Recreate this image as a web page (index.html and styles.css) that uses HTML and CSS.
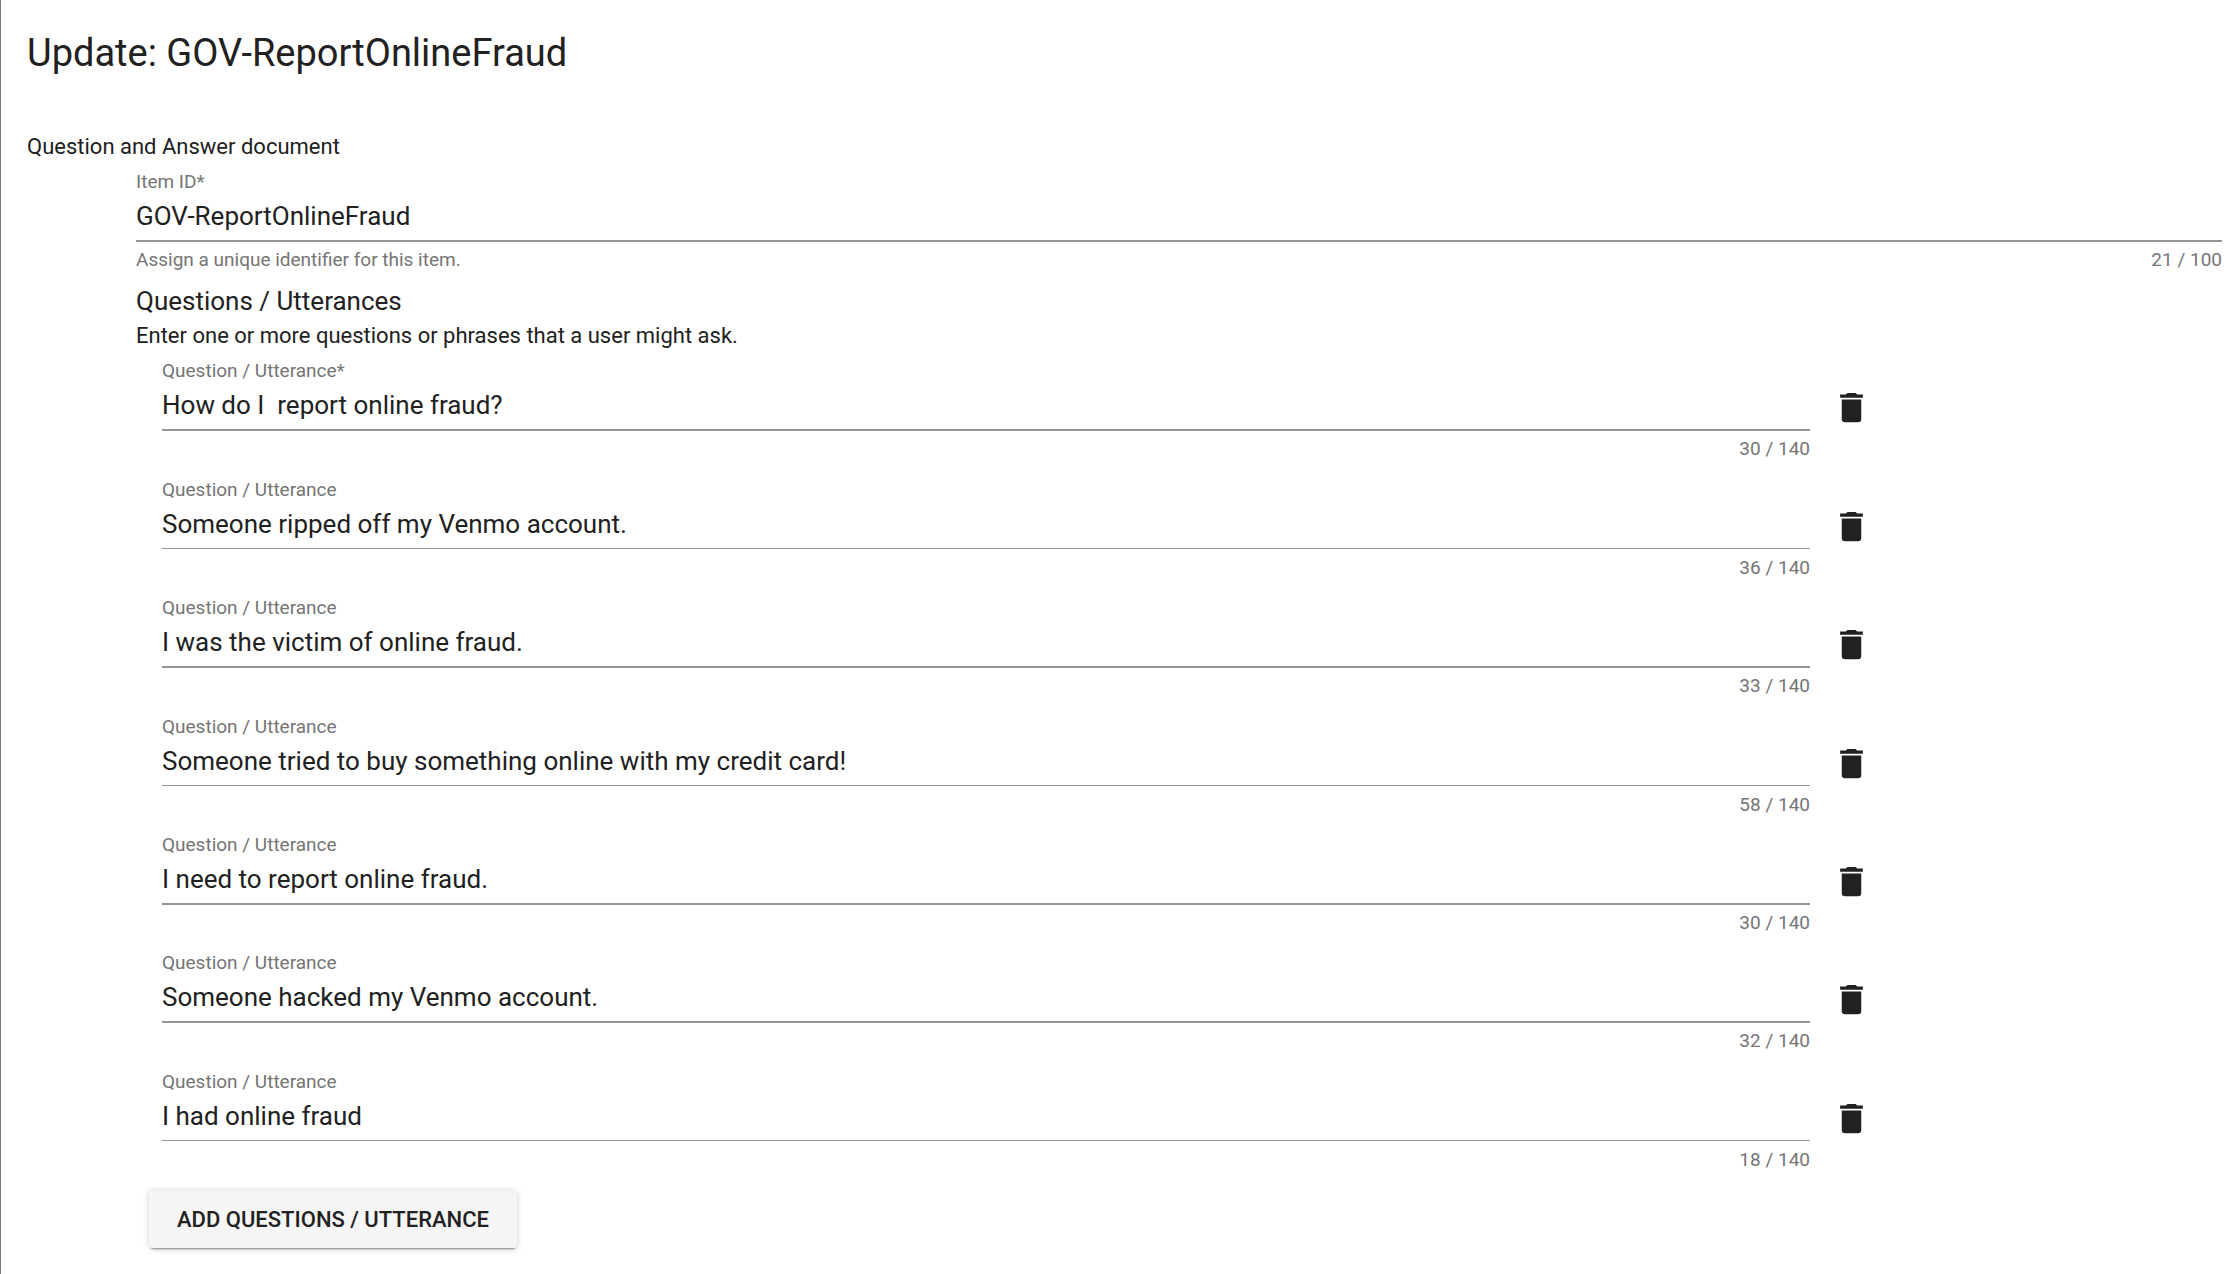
FILE: index.html
```html
<!DOCTYPE html>
<html lang="en">
<head>
    <meta charset="UTF-8">
    <title>Update: GOV-ReportOnlineFraud</title>
    <link rel="stylesheet" href="styles.css">
</head>
<body>
<svg class="sprite">
    <symbol id="icon-delete" viewBox="0 0 24 24">
        <path d="M6 19a2 2 0 0 0 2 2h8a2 2 0 0 0 2-2V7H6v12zM19 4h-3.500l-1-1h-5l-1 1H5v2h14V4z"/>
    </symbol>
</svg>

<main class="page">
    <h1>Update: GOV-ReportOnlineFraud</h1>

    <form class="document">
        <p class="text">Question and Answer document</p>

        <div class="section">
            <div class="field">
                <label for="qid">Item ID*</label>
                <input type="text" id="qid" value="GOV-ReportOnlineFraud">
                <div class="details">
                    <span>Assign a unique identifier for this item.</span>
                    <span class="counter">21 / 100</span>
                </div>
            </div>

            <h2>Questions / Utterances</h2>
            <p class="text">Enter one or more questions or phrases that a user might ask.</p>

            <div class="questions">
                <div class="row">
                    <div class="field">
                        <label for="q0">Question / Utterance*</label>
                        <input type="text" id="q0" value="How do I  report online fraud?">
                        <div class="details"><span class="counter">30 / 140</span></div>
                    </div>
                    <button type="button" class="delete" aria-label="Delete"><svg><use href="#icon-delete"/></svg></button>
                </div>
                <div class="row thin">
                    <div class="field">
                        <label for="q1">Question / Utterance</label>
                        <input type="text" id="q1" value="Someone ripped off my Venmo account.">
                        <div class="details"><span class="counter">36 / 140</span></div>
                    </div>
                    <button type="button" class="delete" aria-label="Delete"><svg><use href="#icon-delete"/></svg></button>
                </div>
                <div class="row">
                    <div class="field">
                        <label for="q2">Question / Utterance</label>
                        <input type="text" id="q2" value="I was the victim of online fraud.">
                        <div class="details"><span class="counter">33 / 140</span></div>
                    </div>
                    <button type="button" class="delete" aria-label="Delete"><svg><use href="#icon-delete"/></svg></button>
                </div>
                <div class="row thin">
                    <div class="field">
                        <label for="q3">Question / Utterance</label>
                        <input type="text" id="q3" value="Someone tried to buy something online with my credit card!">
                        <div class="details"><span class="counter">58 / 140</span></div>
                    </div>
                    <button type="button" class="delete" aria-label="Delete"><svg><use href="#icon-delete"/></svg></button>
                </div>
                <div class="row">
                    <div class="field">
                        <label for="q4">Question / Utterance</label>
                        <input type="text" id="q4" value="I need to report online fraud.">
                        <div class="details"><span class="counter">30 / 140</span></div>
                    </div>
                    <button type="button" class="delete" aria-label="Delete"><svg><use href="#icon-delete"/></svg></button>
                </div>
                <div class="row">
                    <div class="field">
                        <label for="q5">Question / Utterance</label>
                        <input type="text" id="q5" value="Someone hacked my Venmo account.">
                        <div class="details"><span class="counter">32 / 140</span></div>
                    </div>
                    <button type="button" class="delete" aria-label="Delete"><svg><use href="#icon-delete"/></svg></button>
                </div>
                <div class="row thin">
                    <div class="field">
                        <label for="q6">Question / Utterance</label>
                        <input type="text" id="q6" value="I had online fraud">
                        <div class="details"><span class="counter">18 / 140</span></div>
                    </div>
                    <button type="button" class="delete" aria-label="Delete"><svg><use href="#icon-delete"/></svg></button>
                </div>
            </div>

            <button type="button" class="add">Add Questions / Utterance</button>
        </div>
    </form>
</main>
</body>
</html>
```

FILE: styles.css
```css
* {
    box-sizing: border-box;
}
body {
    margin: 0;
    background: #fff;
    color: #212121;
    font-family: Roboto, sans-serif;
    font-size: 22px;
}
.sprite {
    display: none;
}

.page {
    min-height: 100vh;
    padding: 28px 14px 8px 26px;
    border-left: 1px solid #757575;
}
h1 {
    margin: 0 0 52px;
    font-size: 38px;
    font-weight: 400;
    line-height: 50px;
}
h2 {
    margin: 11px 0 0;
    font-size: 26px;
    font-weight: 400;
    line-height: 36px;
}
.text {
    margin: 0;
    line-height: 34px;
}
.section {
    margin-left: 109px;
}

.field {
    flex: none;
}
.field label {
    display: block;
    padding-top: 6px;
    color: #757575;
    font-size: 19px;
    line-height: 24px;
}
.field input {
    display: block;
    width: 100%;
    height: 48px;
    padding: 0 0 3px;
    border: 0;
    border-bottom: 2px solid #949494;
    outline: 0;
    background: none;
    color: inherit;
    font: inherit;
    font-size: 26px;
}
.details {
    display: flex;
    justify-content: space-between;
    padding-top: 6px;
    color: #757575;
    font-size: 19px;
    line-height: 24px;
}
.counter {
    margin-left: auto;
}

.questions {
    padding-left: 26px;
}
.row {
    display: flex;
    height: 118px;
}
.row .field {
    width: 80%;
}
/* every row with a hairline sits one pixel lower */
.row.thin {
    margin-top: 1px;
}
.thin .field input {
    height: 47px;
    margin-bottom: 1px;
    border-bottom-width: 1px;
}
.delete {
    flex: none;
    width: 40px;
    height: 40px;
    margin: 34px 0 0 22px;
    padding: 0;
    border: 0;
    background: none;
    cursor: pointer;
}
.delete svg {
    display: block;
    width: 39px;
    height: 39px;
    fill: #212121;
}

.add {
    height: 58px;
    margin: 8px 13px;
    padding: 0 28px;
    border: 0;
    border-radius: 4px;
    background: #f5f5f5;
    color: #212121;
    box-shadow: 0 3px 2px -2px rgba(0, 0, 0, .4), 0 1px 6px rgba(0, 0, 0, .2);
    font: inherit;
    font-weight: 500;
    text-transform: uppercase;
    cursor: pointer;
}
```
